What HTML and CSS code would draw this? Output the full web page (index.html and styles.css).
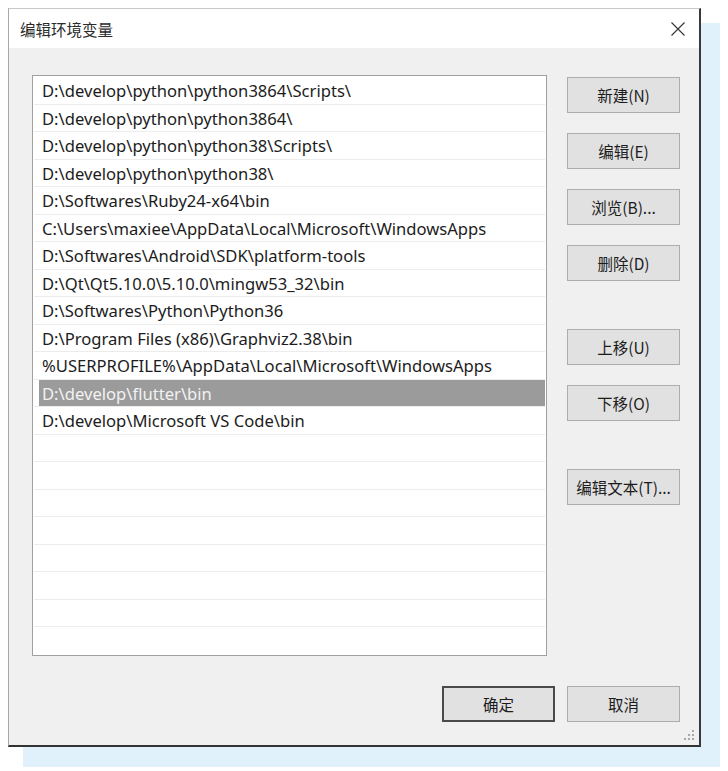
FILE: index.html
```html
<!DOCTYPE html>
<html lang="zh-CN">
<head>
  <meta charset="utf-8">
  <title>编辑环境变量</title>
  <link rel="stylesheet" href="styles.css">
</head>
<body>
  <div class="stage">
    <div class="dialog">
      <div class="titlebar">
        <span class="title">编辑环境变量</span>
        <svg class="close" width="14" height="14" viewBox="0 0 14 14">
          <path d="M0.5 0.5 L13.5 13.5 M13.5 0.5 L0.5 13.5" stroke="#333" stroke-width="1.1" fill="none"/>
        </svg>
      </div>

      <div class="content">
        <div class="main">
          <div class="pathlist">
            <div class="row"><span class="cell">D:\develop\python\python3864\Scripts\</span></div>
            <div class="row"><span class="cell">D:\develop\python\python3864\</span></div>
            <div class="row"><span class="cell">D:\develop\python\python38\Scripts\</span></div>
            <div class="row"><span class="cell">D:\develop\python\python38\</span></div>
            <div class="row"><span class="cell">D:\Softwares\Ruby24-x64\bin</span></div>
            <div class="row"><span class="cell">C:\Users\maxiee\AppData\Local\Microsoft\WindowsApps</span></div>
            <div class="row"><span class="cell">D:\Softwares\Android\SDK\platform-tools</span></div>
            <div class="row"><span class="cell">D:\Qt\Qt5.10.0\5.10.0\mingw53_32\bin</span></div>
            <div class="row"><span class="cell">D:\Softwares\Python\Python36</span></div>
            <div class="row"><span class="cell">D:\Program Files (x86)\Graphviz2.38\bin</span></div>
            <div class="row"><span class="cell">%USERPROFILE%\AppData\Local\Microsoft\WindowsApps</span></div>
            <div class="row selected"><span class="cell">D:\develop\flutter\bin</span></div>
            <div class="row"><span class="cell">D:\develop\Microsoft VS Code\bin</span></div>
            <div class="row"><span class="cell"></span></div>
            <div class="row"><span class="cell"></span></div>
            <div class="row"><span class="cell"></span></div>
            <div class="row"><span class="cell"></span></div>
            <div class="row"><span class="cell"></span></div>
            <div class="row"><span class="cell"></span></div>
            <div class="row"><span class="cell"></span></div>
            <div class="row last"><span class="cell"></span></div>
          </div>

          <div class="side">
            <button class="btn">新建(N)</button>
            <button class="btn">编辑(E)</button>
            <button class="btn">浏览(B)...</button>
            <button class="btn">删除(D)</button>
            <button class="btn group-start">上移(U)</button>
            <button class="btn">下移(O)</button>
            <button class="btn group-start">编辑文本(T)...</button>
          </div>
        </div>

        <div class="footer">
          <button class="btn default">确定</button>
          <button class="btn">取消</button>
        </div>

        <svg class="grip" width="10" height="10" viewBox="0 0 10 10">
          <rect x="8" y="0" width="2" height="2" fill="#a8a8a8"/>
          <rect x="4" y="4" width="2" height="2" fill="#a8a8a8"/>
          <rect x="8" y="4" width="2" height="2" fill="#a8a8a8"/>
          <rect x="0" y="8" width="2" height="2" fill="#a8a8a8"/>
          <rect x="4" y="8" width="2" height="2" fill="#a8a8a8"/>
          <rect x="8" y="8" width="2" height="2" fill="#a8a8a8"/>
        </svg>
      </div>
    </div>
  </div>
</body>
</html>
```

FILE: styles.css
```css
html, body {
  margin: 0;
  padding: 0;
  background: #fff;
  font-family: "Noto Sans", "Noto Sans CJK SC", sans-serif;
  font-size: 15px;
  color: #1c1c1c;
}

/* light blue card sitting behind the dialog */
.stage {
  position: relative;
  width: 728px;
  height: 771px;
  padding: 8px 0 0 8px;
  box-sizing: border-box;
}
.stage::before {
  content: "";
  position: absolute;
  left: 23px;
  top: 23px;
  width: 697px;
  height: 744px;
  background: #e0f1fb;
}

.dialog {
  position: relative;
  width: 693px;
  height: 739px;
  box-sizing: border-box;
  border-top: 1px solid #c8c8c8;
  border-left: 1px solid #a8a8a8;
  border-right: 2px solid #3a3a3a;
  border-bottom: 2px solid #333;
  display: flex;
  flex-direction: column;
  background: #f0f0f0;
}

.titlebar {
  height: 39px;
  background: #fff;
  display: flex;
  align-items: center;
  justify-content: space-between;
  padding: 0 14px 0 11px;
}
.title {
  font-family: "Noto Sans CJK SC", sans-serif;
  font-size: 15.5px;
  color: #2a2a2a;
}

.content {
  position: relative;
  flex: 1;
  padding: 27px 0 0 23px;
  display: flex;
  flex-direction: column;
}

.main {
  display: flex;
  gap: 20px;
}

.pathlist {
  width: 515px;
  height: 581px;
  box-sizing: border-box;
  border: 1px solid #a0a0a0;
  background: #fff;
  padding: 1px 1px 0 1px;
  overflow: hidden;
}
.row {
  height: 27.5px;
  box-sizing: border-box;
  border-bottom: 1px solid #ececec;
  padding: 0 0 0 5px;
  display: flex;
}
.row.last {
  border-bottom: none;
}
.cell {
  flex: 1;
  padding-left: 3px;
  font-size: 16.6px;
  line-height: 28px;
  white-space: nowrap;
}
.row.selected .cell {
  background: #9b9b9b;
  color: #f2f2f2;
}

.side {
  display: flex;
  flex-direction: column;
  gap: 20px;
  padding-top: 2px;
}
.side .group-start {
  margin-top: 28px;
}

.btn {
  width: 113px;
  height: 36px;
  box-sizing: border-box;
  border: 1px solid #adadad;
  background: #e1e1e1;
  font-family: "Noto Sans CJK SC", sans-serif;
  font-size: 15.5px;
  color: #1c1c1c;
  padding: 0;
}
.btn.default {
  border: 2px solid #4a4a4a;
}

.footer {
  display: flex;
  justify-content: flex-end;
  gap: 12px;
  margin-top: 30px;
  padding-right: 19px;
}

.grip {
  position: absolute;
  right: 5px;
  bottom: 5px;
}
```
